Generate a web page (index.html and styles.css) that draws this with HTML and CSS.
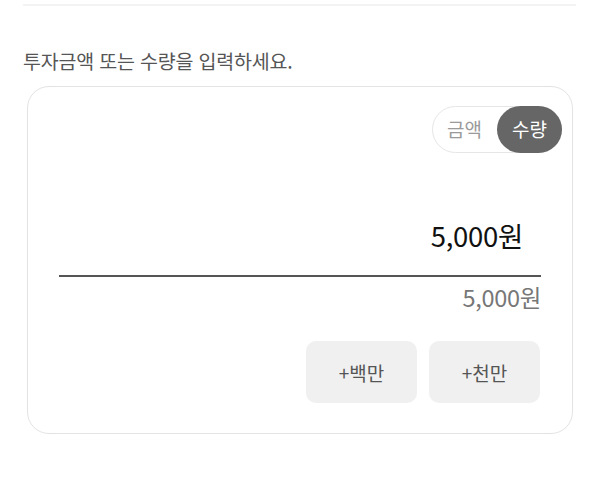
FILE: index.html
```html
<!DOCTYPE html>
<html lang="ko">
<head>
<meta charset="utf-8">
<link rel="stylesheet" href="styles.css">
</head>
<body>
<div class="page">
  <div class="topline"></div>
  <p class="title">투자금액 또는 수량을 입력하세요.</p>
  <div class="card">
    <div class="toggle-row">
      <div class="toggle">
        <span class="opt">금액</span>
        <span class="opt active">수량</span>
      </div>
    </div>
    <div class="amount">5,000원</div>
    <div class="underline"></div>
    <div class="sub">5,000원</div>
    <div class="btns">
      <button class="btn">+백만</button>
      <button class="btn">+천만</button>
    </div>
  </div>
</div>
</body>
</html>
```
FILE: styles.css
```css
* { box-sizing: border-box; }
html, body { margin: 0; padding: 0; background: #fff; }
body { font-family: "Noto Sans CJK KR", "Noto Sans", sans-serif; }
.page { padding: 4px 23px 0 23px; }
.topline { height: 2px; background: #f3f3f3; margin-right: 1px; }
.title {
  margin: 41px 0 0 0;
  font-size: 19.5px;
  line-height: 28px;
  color: #555;
  letter-spacing: -0.2px;
}
.card {
  margin: 11px 4px 0 4px;
  border: 1px solid #e3e3e3;
  border-radius: 22px;
  height: 348px;
  padding: 19px 10px 0 31px;
}
.toggle-row { display: flex; justify-content: flex-end; }
.toggle {
  display: flex;
  align-items: center;
  height: 47px;
  border: 1px solid #e6e6e6;
  border-radius: 24px;
  padding-left: 13px;
}
.opt {
  font-size: 19px;
  color: #9a9a9a;
  height: 47px;
  line-height: 45px;
  width: 37px;
  text-align: center;
}
.opt.active {
  margin-left: 14px;
  margin-right: -1px;
  background: #666;
  color: #fff;
  border-radius: 24px;
  width: 65px;
  height: 47px;
}
.amount {
  text-align: right;
  font-size: 27.5px;
  line-height: 36px;
  color: #111;
  margin-top: 64px;
  padding-right: 39px;
  letter-spacing: -0.3px;
}
.underline {
  height: 2px;
  background: #555;
  margin: 22px 21px 0 0;
}
.sub {
  text-align: right;
  font-size: 23.5px;
  line-height: 30px;
  color: #777;
  margin: 5px 21px 0 0;
  letter-spacing: -0.3px;
}
.btns {
  display: flex;
  justify-content: flex-end;
  gap: 12px;
  margin: 29px 22px 0 0;
}
.btn {
  width: 111px;
  height: 62px;
  border: none;
  border-radius: 10px;
  background: #f0f0f0;
  font-family: inherit;
  font-size: 19px;
  color: #555;
  padding: 0;
}
```
